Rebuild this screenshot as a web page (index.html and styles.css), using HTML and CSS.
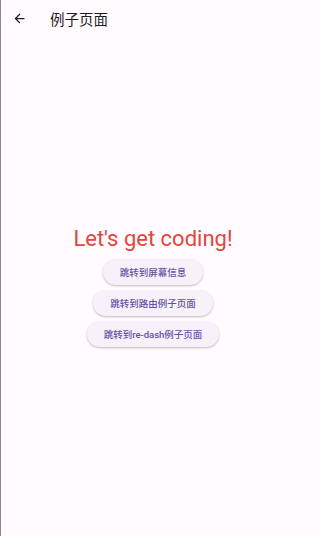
FILE: index.html
```html
<!DOCTYPE html>
<html lang="zh">
<head>
<meta charset="utf-8">
<link rel="stylesheet" href="styles.css">
</head>
<body>
<div class="screen">
  <header class="appbar">
    <span class="back">
      <svg width="15" height="15" viewBox="0 0 24 24"><path d="M20 11H7.83l5.59-5.59L12 4l-8 8 8 8 1.41-1.41L7.83 13H20v-2z" fill="#1d1b20"/></svg>
    </span>
    <span class="title">例子页面</span>
  </header>
  <main class="content">
    <h1 class="heading">Let's get coding!</h1>
    <div class="buttons">
      <button class="btn">跳转到屏幕信息</button>
      <button class="btn">跳转到路由例子页面</button>
      <button class="btn">跳转到re-dash例子页面</button>
    </div>
  </main>
</div>
</body>
</html>
```
FILE: styles.css
```css
html, body {
  margin: 0;
  padding: 0;
  background: #fffbfe;
}
body {
  font-family: Roboto, "Noto Sans CJK SC", sans-serif;
}
.screen {
  width: 300px;
  height: 536px;
  box-sizing: border-box;
  border-left: 1px solid #8a8a8a;
  display: flex;
  flex-direction: column;
}
.appbar {
  height: 36px;
  display: flex;
  align-items: center;
  padding-left: 11px;
}
.back {
  width: 15px;
  height: 15px;
  display: flex;
  margin-top: 1px;
}
.title {
  margin-left: 23px;
  font-size: 14.5px;
  color: #1d1b20;
  font-family: "Noto Sans CJK SC", sans-serif;
}
.content {
  flex: 1;
  display: flex;
  flex-direction: column;
  align-items: center;
  padding-top: 190px;
  padding-left: 5px;
}
.heading {
  margin: 0;
  font-weight: 400;
  font-size: 22px;
  line-height: 26px;
  color: #e2463c;
}
.buttons {
  margin-top: 7px;
  display: flex;
  flex-direction: column;
  align-items: center;
  gap: 5px;
}
.btn {
  height: 26px;
  padding: 0 17px;
  border: none;
  border-radius: 13px;
  background: #f7f2fa;
  color: #6750a4;
  font-family: Roboto, "Noto Sans CJK SC", sans-serif;
  font-size: 9.5px;
  font-weight: 500;
  box-shadow: 0 1px 2px rgba(0,0,0,0.2), 0 1px 3px rgba(0,0,0,0.07);
}
```
